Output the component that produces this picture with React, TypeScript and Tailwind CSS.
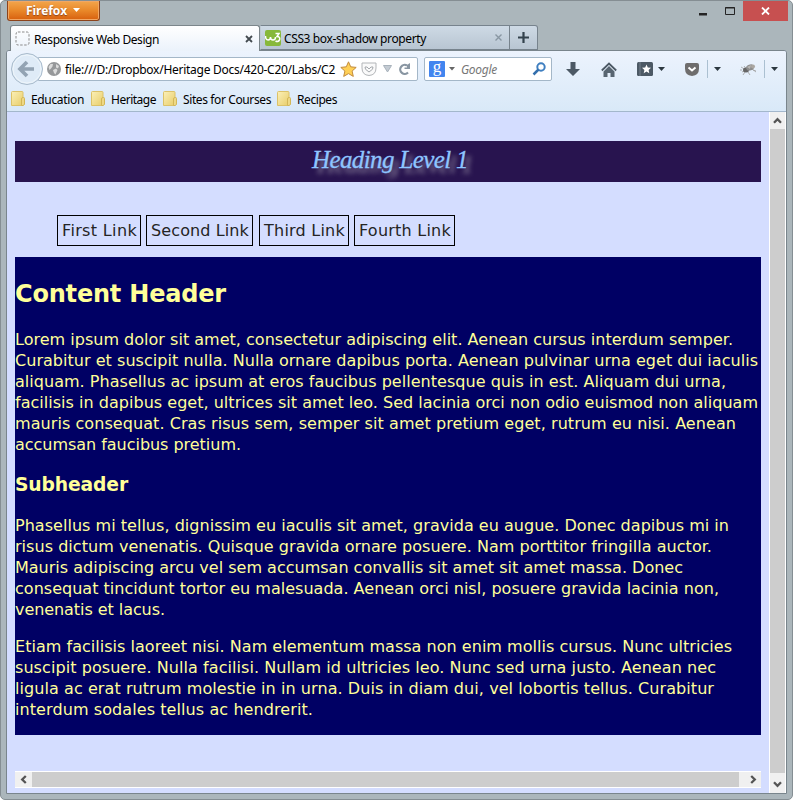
import React from 'react';

const ui = "font-['Noto_Sans',sans-serif] text-[12px] leading-[16px] pt-[2px] text-black whitespace-nowrap";

type LineData = [string, number];

const first: LineData[] = [
  ['Lorem ipsum dolor sit amet, consectetur adipiscing elit. Aenean cursus interdum semper.', 718],
  ['Curabitur et suscipit nulla. Nulla ornare dapibus porta. Aenean pulvinar urna eget dui iaculis', 743],
  ['aliquam. Phasellus ac ipsum at eros faucibus pellentesque quis in est. Aliquam dui urna,', 711],
  ['facilisis in dapibus eget, ultrices sit amet leo. Sed lacinia orci non odio euismod non aliquam', 743],
  ['mauris consequat. Cras risus sem, semper sit amet pretium eget, rutrum eu nisi. Aenean', 721],
  ['accumsan faucibus pretium.', 226],
];
const second: LineData[] = [
  ['Phasellus mi tellus, dignissim eu iaculis sit amet, gravida eu augue. Donec dapibus mi in', 714],
  ['risus dictum venenatis. Quisque gravida ornare posuere. Nam porttitor fringilla auctor.', 697],
  ['Mauris adipiscing arcu vel sem accumsan convallis sit amet sit amet massa. Donec', 668],
  ['consequat tincidunt tortor eu malesuada. Aenean orci nisl, posuere gravida lacinia non,', 704],
  ['venenatis et lacus.', 150],
];
const third: LineData[] = [
  ['Etiam facilisis laoreet nisi. Nam elementum massa non enim mollis cursus. Nunc ultricies', 717],
  ['suscipit posuere. Nulla facilisi. Nullam id ultricies leo. Nunc sed urna justo. Aenean nec', 701],
  ['ligula ac erat rutrum molestie in in urna. Duis in diam dui, vel lobortis tellus. Curabitur', 699],
  ['interdum sodales tellus ac hendrerit.', 298],
];

// Spreads the letters of a text so that it fills the given width.
function Fit({ text, width, className = '' }: { text: string; width: number; className?: string }) {
  const ref = React.useRef<HTMLSpanElement>(null);
  const [gap, setGap] = React.useState(0);
  React.useLayoutEffect(() => {
    const measure = () => {
      const el = ref.current;
      if (!el) return;
      el.style.letterSpacing = '0px';
      const next = (width - el.getBoundingClientRect().width) / text.length;
      el.style.letterSpacing = next + 'px';
      setGap(next);
    };
    measure();
    document.fonts.ready.then(measure);
  }, [text, width]);
  return <span ref={ref} className={'inline-block whitespace-nowrap ' + className} style={{ letterSpacing: gap }}>{text}</span>;
}

function Paragraph({ lines, className }: { lines: LineData[]; className: string }) {
  return (
    <p className={'text-[16px] leading-[21px] ' + className}>
      {lines.map(([t, w]) => <span key={t} className="block h-[21px]"><Fit text={t} width={w} /></span>)}
    </p>
  );
}

function Folder() {
  return (
    <svg width="14" height="16" viewBox="0 0 14 16" className="shrink-0">
      <defs><linearGradient id="fold" x2="1" y2="1"><stop stopColor="#fbf0b8" /><stop offset="1" stopColor="#e8cd68" /></linearGradient></defs>
      <path d="M.5 1.500q0-1 1-1h9.500q1 0 1 1v13H.5z" fill="url(#fold)" stroke="#dcc268" />
      <path d="M10.500 14.500V8q0-1.500 1.500-1.500h.5q1 0 1 1v6l-1.500 1z" fill="#eed985" stroke="#d3b757" />
    </svg>
  );
}

function Caret({ color = '#2c3840' }: { color?: string }) {
  return <svg width="7" height="4" viewBox="0 0 7 4"><path d="M0 0h7L3.500 4z" fill={color} /></svg>;
}

function Chevron({ turn }: { turn: string }) {
  return <svg width="9" height="7" viewBox="0 0 9 7" className={turn}><path d="M1 5.800 4.500 2.200 8 5.800" fill="none" stroke="#555" strokeWidth="2.300" /></svg>;
}

function TitleBar() {
  return (
    <div className="flex h-[24px] justify-between pl-[6px] pr-[4px]">
      <div className="flex h-[20px] w-[93px] items-center justify-center rounded-b-[3px] border border-t-0 border-[#8c431b] bg-gradient-to-b from-[#f2a64c] via-[#e98829] to-[#d75f0c] pr-[1px] shadow-[inset_0_0_0_1px_#f1a764]">
        <Fit text="Firefox" width={41} className="font-['Open_Sans',sans-serif] text-[12px] font-bold leading-[18px] text-white [text-shadow:0_1px_1px_#8c431b]" />
        <span className="ml-[6px] pb-[1px] leading-[0]"><Caret color="#fff" /></span>
      </div>
      <div className="flex">
        <svg width="45" height="20" viewBox="0 0 45 20"><path d="M1 12h8v2.500H1z" fill="#242424" /><path d="M27.500 6.500h9v7h-9zM27 7h10" fill="none" stroke="#242424" /></svg>
        <div className="flex h-[20px] w-[45px] items-center justify-center bg-[#c75050]">
          <svg width="9" height="8" viewBox="0 0 9 8"><path d="M1 .5 8 7.500M8 .5 1 7.500" stroke="#fff" strokeWidth="1.800" /></svg>
        </div>
      </div>
    </div>
  );
}

function Tabs() {
  return (
    <div className="relative z-10 flex h-[25px] pl-[9px]">
      <div className="flex h-[26px] w-[250px] items-center rounded-t-[3px] border border-b-0 border-[#7c868b] bg-gradient-to-b from-white to-[#ebf2fb] pl-[4px] pr-[6px]">
        <svg width="15" height="15" viewBox="0 0 15 15"><rect x="1" y="1" width="13" height="13" rx="2" fill="none" stroke="#8b8b8b" strokeDasharray="2.500 1.500" /></svg>
        <Fit text="Responsive Web Design" width={125} className={'ml-[4px] ' + ui} />
        <svg width="8" height="8" viewBox="0 0 8 8" className="ml-auto"><path d="m1 1 6 6m0-6L1 7" stroke="#444b50" strokeWidth="1.800" /></svg>
      </div>
      <div className="flex h-[25px] w-[250px] items-center border border-[#77838d] border-l-[#c0cbd4] bg-gradient-to-b from-[#cedae5] to-[#b8c5d2] pl-[4px] pr-[7px]">
        <svg width="16" height="16" viewBox="0 0 16 16"><rect width="16" height="16" rx="2" fill="#87b83a" /><path d="M.5 6q0 4 2.500 4t2.500-3q0 3 2.500 3t2.500-3M10.500 3.500H14L12 6.500q3.500 0 2.500 3.500-1.500 2.500-4 1" fill="none" stroke="#fff" strokeWidth="1.500" /></svg>
        <Fit text="CSS3 box-shadow property" width={142} className={'ml-[3px] ' + ui} />
        <svg width="7" height="7" viewBox="0 0 7 7" className="ml-auto"><path d="m.5.5 6 6m0-6-6 6" stroke="#8997a3" strokeWidth="1.400" /></svg>
      </div>
      <div className="flex h-[25px] w-[28px] items-center justify-center rounded-tr-[3px] border border-l-0 border-[#77838d] bg-gradient-to-b from-[#cedae5] to-[#b8c5d2]">
        <svg width="11" height="11" viewBox="0 0 11 11"><path d="M0 5.500h11M5.500 0v11" stroke="#33424d" strokeWidth="2.200" /></svg>
      </div>
    </div>
  );
}

function BackButton() {
  return (
    <svg width="32" height="32" viewBox="0 0 32 32" className="relative z-10 -mr-[5px] shrink-0">
      <circle cx="16" cy="16" r="15.500" fill="#dfebf7" stroke="#a8bacb" />
      <circle cx="16" cy="16" r="14" fill="none" stroke="#eff6fb" />
      <path d="M23 16H10M16 9l-7 7 7 7" fill="none" stroke="#93a3b3" strokeWidth="3.700" />
    </svg>
  );
}

function NavBar() {
  return (
    <div className="flex h-[36px] items-center pl-[4px]">
      <BackButton />
      <div className="flex h-[24px] w-[380px] items-center rounded-r-[2px] border border-[#a4b7c8] bg-white pl-[8px] pr-[6px]">
        <svg width="14" height="14" viewBox="0 0 14 14" className="shrink-0"><circle cx="7" cy="7" r="7" fill="#96989a" /><path d="m1.500 5 2-3 2.500 0-.5 2.500L4 6.500 2.500 8zM6 8l3-1.500 1.500 1.500L8.500 12.500 7 11zM9 2l3 2-1 2.500-2-1z" fill="#dcdcdc" /></svg>
        <Fit text="file:///D:/Dropbox/Heritage Docs/420-C20/Labs/C2" width={270} className={'ml-[4px] ' + ui} />
        <svg width="17" height="16" viewBox="0 0 17 16" className="ml-[5px]"><path d="m8.500.8 2.200 5 5.500.6-4.100 3.700 1.200 5.300-4.800-2.800-4.800 2.800 1.200-5.300L.8 6.400l5.500-.6z" fill="#ffd056" stroke="#c18a3c" /></svg>
        <svg width="16" height="14" viewBox="0 0 16 14" className="ml-[4px]"><path d="M1 1h14v5q0 7-7 7.500Q1 13 1 6z" fill="#fafafa" stroke="#b2b5b8" /><path d="M4 5q2-1 4 2 2-3 4-2 1 2-4 5-5-3-4-5" fill="none" stroke="#a5a9ad" /></svg>
        <svg width="9" height="8" viewBox="0 0 9 8" className="ml-[6px]"><path d="M.5.500h8l-4 6.500z" fill="#c3cbd3" stroke="#a8b2bb" /></svg>
        <svg width="13" height="12" viewBox="0 0 13 12" className="ml-auto"><path d="M10 9.500A4.500 4.500 0 1 1 9 2.500" fill="none" stroke="#8996a2" strokeWidth="2.200" /><path d="M12 0v6H6.500V4.500H9V2z" fill="#8996a2" /></svg>
      </div>
      <div className="ml-[6px] flex h-[24px] w-[128px] items-center rounded-[2px] border border-[#a4b7c8] bg-white pl-[4px] pr-[5px]">
        <div className="flex h-[16px] w-[16px] justify-center rounded-[1px] bg-[#4285ef] font-['Liberation_Serif',serif] text-[17px] leading-[12px] text-white">g</div>
        <span className="ml-[4px] leading-[0]"><svg width="6" height="4"><path d="M0 0h6L3 3.500z" fill="#666" /></svg></span>
        <Fit text="Google" width={36} className={ui + ' ml-[6px] italic !text-[#777]'} />
        <svg width="14" height="14" viewBox="0 0 14 14" className="ml-auto"><circle cx="9" cy="5" r="3.700" fill="none" stroke="#3f7fc0" strokeWidth="2" /><path d="m6.500 7.500-5 5" stroke="#3470ad" strokeWidth="2.500" /></svg>
      </div>
      <svg width="14" height="14" viewBox="0 0 14 14" className="ml-[14px]"><path d="M4.500 0h5v7H14L7 14 0 7h4.500z" fill="#4c5965" /></svg>
      <svg width="16" height="15" viewBox="0 0 16 15" className="ml-[21px]"><path d="m.8 8.500 7.200-7 7.200 7" fill="none" stroke="#4c5965" strokeWidth="1.800" /><path d="m2.500 9.500 5.500-5.500 5.500 5.500V15H9.500v-4h-3v4h-4z" fill="#586571" /></svg>
      <svg width="16" height="14" viewBox="0 0 16 14" className="ml-[20px]"><rect width="16" height="14" rx="1.500" fill="#4c5965" /><path d="M3 0v14" stroke="#75818c" /><path d="m9.500 2.500 1.300 3 3.200.3-2.400 2.200.7 3.200-2.800-1.700-2.800 1.700.7-3.200L5 5.800l3.200-.3z" fill="#fff" /></svg>
      <span className="ml-[5px] leading-[0]"><Caret /></span>
      <svg width="14" height="13" viewBox="0 0 14 13" className="ml-[20px]"><path d="M0 2q0-2 2-2h10q2 0 2 2v3.500q0 7-7 7.500Q0 12.500 0 5.500z" fill="#6e6d6d" /><path d="m3.500 4.500 3.500 3 3.500-3" fill="none" stroke="#fff" strokeWidth="2" /></svg>
      <div className="ml-[8px] h-[18px] w-px bg-[#abc0d1]" />
      <span className="ml-[6px] leading-[0]"><Caret /></span>
      <svg width="17" height="15" viewBox="0 0 17 15" className="ml-[19px]"><path d="m1 5 5 3-4 2m3 0-2 3m5-3 2 3m3-5 3 1M4 4l3 4m5-1 4 3M2 8H0" stroke="#a0a0a0" strokeWidth=".8" fill="none" /><ellipse cx="6" cy="8" rx="3" ry="2.500" fill="#666" /><ellipse cx="10" cy="5.500" rx="4" ry="3" transform="rotate(-20 10 5.500)" fill="#8c8c8c" /><circle cx="13" cy="4.500" r="2" fill="#aaa6a1" /><path d="m7 5 4-2-1 4" fill="#b9b7b4" /></svg>
      <div className="ml-[7px] h-[18px] w-px bg-[#abc0d1]" />
      <span className="ml-[6px] leading-[0]"><Caret /></span>
    </div>
  );
}

function Bookmarks() {
  const items: [string, number, string][] = [
    ['Education', 53, 'ml-[4px]'], ['Heritage', 45, 'ml-[7px]'],
    ['Sites for Courses', 88, 'ml-[7px]'], ['Recipes', 40, 'ml-[6px]'],
  ];
  return (
    <div className="flex h-[24px] items-center">
      {items.map(([name, w, gap]) => (
        <div key={name} className={'flex items-center ' + gap}>
          <Folder />
          <Fit text={name} width={w} className={'ml-[6px] ' + ui} />
        </div>
      ))}
    </div>
  );
}

function Page() {
  return (
    <div className="w-[762px] bg-[#d4ddff] pl-[8px] pt-[29px] font-['DejaVu_Sans',sans-serif]">
      <h1 className="flex h-[41px] w-[746px] justify-center bg-[#28144f] pl-[4px] text-[#8ec5ff]">
        <Fit text="Heading Level 1" width={156} className="font-['URW_Chancery_L','Z003','Liberation_Serif',cursive] text-[25px] italic leading-[37px] [-webkit-text-stroke:0.3px_#8ec5ff] [text-shadow:5px_5px_5px_#8d849d]" />
      </h1>
      <nav className="mt-[33px] flex h-[31px] pl-[42px] text-[16px] leading-[29px] text-[#242424]">
        <a className="flex w-[84px] items-end border border-black pl-[4px]"><Fit text="First Link" width={75} className="pt-[2px]" /></a>
        <a className="ml-[5px] flex w-[107px] items-end border border-black pl-[4px]"><Fit text="Second Link" width={98} /></a>
        <a className="ml-[6px] flex w-[90px] items-end border border-black pl-[4px]"><Fit text="Third Link" width={81} /></a>
        <a className="ml-[5px] flex w-[101px] items-end border border-black pl-[4px]"><Fit text="Fourth Link" width={92} /></a>
      </nav>
      <main className="mt-[11px] h-[478px] w-[746px] overflow-hidden bg-[#000064] pt-[21px] text-[#ffff99]">
        <h2 className="h-[32px] text-[24px] font-bold leading-[32px]"><Fit text="Content Header" width={211} /></h2>
        <Paragraph lines={first} className="mt-[19px]" />
        <h3 className="mt-[19px] h-[22px] text-[18.720px] font-bold leading-[22px]"><Fit text="Subheader" width={113} /></h3>
        <Paragraph lines={second} className="mt-[19px]" />
        <Paragraph lines={third} className="mt-[16px]" />
      </main>
      <div className="mt-[36px] flex h-[17px] w-[746px] items-center border-y border-white bg-[#cdcdcd]">
        <div className="flex h-full w-[17px] items-center justify-center bg-[#f0f0f0]"><Chevron turn="-rotate-90" /></div>
        <div className="ml-auto flex h-full w-[22px] items-center justify-center bg-[#f0f0f0] pl-[6px]"><Chevron turn="rotate-90" /></div>
      </div>
    </div>
  );
}

export default function App() {
  return (
    <div className="h-[800px] w-[793px] overflow-hidden bg-white">
      <div className="h-[800px] w-[793px] rounded-[5px] border border-[#858e93] bg-[#abb6bb]">
        <TitleBar />
        <Tabs />
        <div className="ml-[5px] h-[744px] w-[781px] overflow-hidden rounded-t-[3px] border border-[#79858c] bg-[#d4ddff]">
          <div className="h-[61px] border-b border-[#a3b7cc] bg-gradient-to-b from-[#ecf3fd] to-[#d9e9f8]">
            <NavBar />
            <Bookmarks />
          </div>
          <div className="flex h-[681px]">
            <Page />
            <div className="flex w-[17px] flex-col justify-between border-x border-white bg-[#cdcdcd]">
              <div className="flex h-[17px] items-center justify-center bg-[#f0f0f0]"><Chevron turn="" /></div>
              <div className="flex h-[20px] items-center justify-center bg-[#f0f0f0] pt-[3px]"><Chevron turn="rotate-180" /></div>
            </div>
          </div>
        </div>
      </div>
    </div>
  );
}
